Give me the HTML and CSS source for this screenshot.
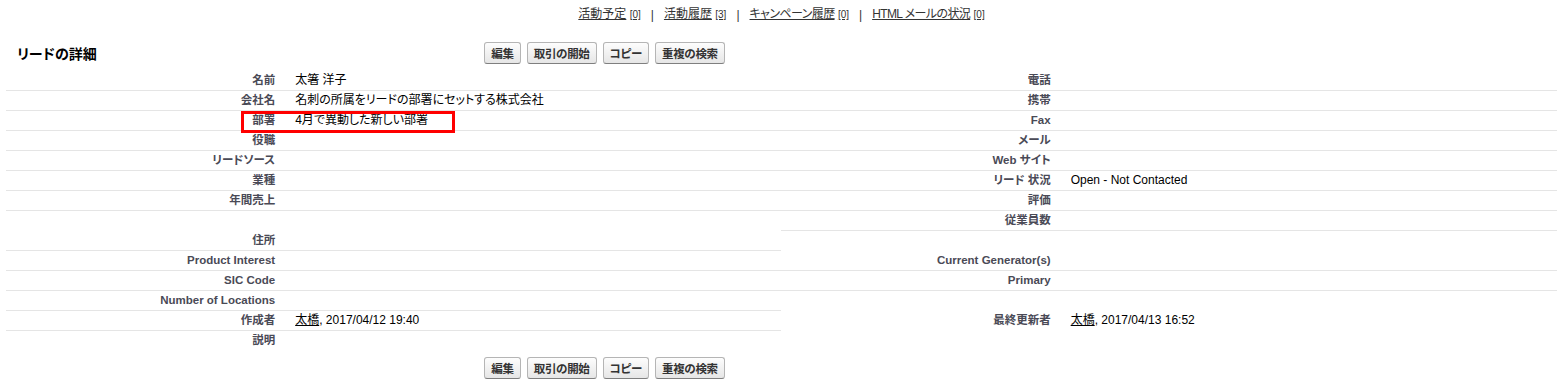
FILE: index.html
```html
<!DOCTYPE html>
<html lang="ja">
<head>
    <meta charset="UTF-8">
    <meta name="viewport" content="width=device-width, initial-scale=1.0">
    <title>リードの詳細</title>
    <link rel="stylesheet" href="styles.css">
</head>
<body>
    <div class="linklets">
        <a href="#"><span class="lk">活動予定</span> <span class="count">[0]</span></a>
        <span class="sep">|</span>
        <a href="#"><span class="lk">活動履歴</span> <span class="count">[3]</span></a>
        <span class="sep">|</span>
        <a href="#"><span class="lk kana">キャンペーン履歴</span> <span class="count">[0]</span></a>
        <span class="sep">|</span>
        <a href="#"><span class="lk kana">HTML メールの状況</span> <span class="count">[0]</span></a>
    </div>

    <div class="pb-header">
        <div class="pb-title"><h2>リードの詳細</h2></div>
        <div class="pb-buttons">
            <button class="btn">編集</button>
            <button class="btn">取引の開始</button>
            <button class="btn">コピー</button>
            <button class="btn">重複の検索</button>
        </div>
    </div>

    <div class="detail-list">
        <div class="label">名前</div><div class="data">太箸 洋子</div>
        <div class="label">電話</div><div class="data"></div>

        <div class="label">会社名</div><div class="data">名刺の所属をリードの部署にセットする株式会社</div>
        <div class="label">携帯</div><div class="data"></div>

        <div class="label">部署</div><div class="data">4月で異動した新しい部署</div>
        <div class="label">Fax</div><div class="data"></div>

        <div class="label">役職</div><div class="data"></div>
        <div class="label">メール</div><div class="data"></div>

        <div class="label">リードソース</div><div class="data"></div>
        <div class="label">Web サイト</div><div class="data"></div>

        <div class="label">業種</div><div class="data"></div>
        <div class="label">リード 状況</div><div class="data">Open - Not Contacted</div>

        <div class="label">年間売上</div><div class="data"></div>
        <div class="label">評価</div><div class="data"></div>

        <div class="label nb"></div><div class="data nb"></div>
        <div class="label">従業員数</div><div class="data"></div>

        <div class="label">住所</div><div class="data"></div>
        <div class="label nb"></div><div class="data nb"></div>

        <div class="label">Product Interest</div><div class="data"></div>
        <div class="label">Current Generator(s)</div><div class="data"></div>

        <div class="label">SIC Code</div><div class="data"></div>
        <div class="label">Primary</div><div class="data"></div>

        <div class="label">Number of Locations</div><div class="data"></div>
        <div class="label nb"></div><div class="data nb"></div>

        <div class="label">作成者</div><div class="data"><a href="#">太橋</a>, 2017/04/12 19:40</div>
        <div class="label nb">最終更新者</div><div class="data nb"><a href="#">太橋</a>, 2017/04/13 16:52</div>

        <div class="label nb">説明</div><div class="data nb"></div>
        <div class="label nb"></div><div class="data nb"></div>

        <div class="highlight"></div>
    </div>

    <div class="pb-header pb-bottom">
        <div class="pb-title"></div>
        <div class="pb-buttons">
            <button class="btn">編集</button>
            <button class="btn">取引の開始</button>
            <button class="btn">コピー</button>
            <button class="btn">重複の検索</button>
        </div>
    </div>
</body>
</html>
```

FILE: styles.css
```css
body {
    margin: 0 8px 0 6px;
    font-family: "Liberation Sans", Arial, "Noto Sans CJK JP", sans-serif;
    font-size: 12px;
    font-feature-settings: "palt";
    color: #000;
    background: #fff;
}
a {
    color: #000;
    text-decoration: underline;
}
.linklets {
    display: flex;
    justify-content: center;
    align-items: center;
    gap: 10px;
    padding-top: 6px;
    line-height: 16px;
    color: #333;
}
.linklets a {
    color: #333;
    text-decoration: none;
}
.linklets .lk,
.linklets .count {
    text-decoration: underline;
}
.linklets .kana {
    letter-spacing: -0.6px;
}
.linklets .count {
    font-size: 10px;
}
.pb-header {
    display: flex;
    align-items: center;
    height: 26px;
    margin-top: 17px;
    padding-bottom: 5px;
}
.pb-title {
    width: 30%;
    padding-left: 11px;
    box-sizing: border-box;
}
.pb-title h2 {
    margin: 0;
    font-size: 14px;
    font-weight: bold;
    color: #000;
}
.pb-buttons {
    display: flex;
    gap: 6px;
    padding-left: 13px;
}
.btn {
    font-family: inherit;
    font-feature-settings: "palt";
    font-size: 11.5px;
    font-weight: bold;
    letter-spacing: -0.3px;
    color: #333;
    height: 22px;
    padding: 0 6px;
    border: 1px solid #b5b5b5;
    border-bottom-color: #7f7f7f;
    border-radius: 3px;
    background: linear-gradient(#fdfdfd, #e6e6e6);
    cursor: pointer;
}
.detail-list {
    position: relative;
    display: grid;
    grid-template-columns: 18% 32% 18% 32%;
    grid-auto-rows: 20px;
}
.label,
.data {
    padding: 2px 10px 3px;
    line-height: 14px;
    border-bottom: 1px solid #e5e5e5;
    box-sizing: border-box;
    white-space: nowrap;
}
.label {
    text-align: right;
    font-size: 11.5px;
    font-weight: bold;
    color: #4a4a56;
}
.nb {
    border-bottom: none;
}
.highlight {
    position: absolute;
    left: 235px;
    top: 40px;
    width: 214px;
    height: 22px;
    border: 3px solid #f00;
    box-sizing: border-box;
    pointer-events: none;
}
.pb-bottom {
    margin-top: 4px;
}
```
